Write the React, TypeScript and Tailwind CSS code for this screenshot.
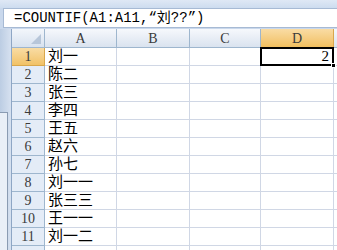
import React from "react";

const names = ["刘一", "陈二", "张三", "李四", "王五", "赵六", "孙七", "刘一一", "张三三", "王一一", "刘一二"];
const cols = ["A", "B", "C", "D"];

const serif = { fontFamily: "'Liberation Serif', 'Noto Sans CJK SC', serif" };

const App = () => {
    return (
        <div className="w-[337px] h-[250px] overflow-hidden flex flex-col bg-[#c9d8ec]">
            {/* top band */}
            <div className="h-[8px] bg-gradient-to-b from-[#dfe8f5] to-[#cddcef]" />

            {/* formula bar */}
            <div className="h-[20px] ml-[3px] bg-white border-y border-l border-[#a7bad4] flex items-center pl-[10px]">
                <span
                    className="text-[14px] text-black leading-none whitespace-nowrap"
                    style={{ fontFamily: "'Liberation Mono', 'Noto Sans CJK SC', monospace" }}
                >
                    =COUNTIF(A1:A11,“刘??”)
                </span>
            </div>
            <div className="h-[1px]" />

            <div className="flex flex-1 min-h-0">
                {/* left frame strip */}
                <div className="w-[12px] flex flex-col bg-gradient-to-r from-[#bccde3] to-[#d6e1f0] border-r border-[#8ea6c5]">
                    <div className="h-[83px]" />
                    <div className="flex-1 mr-[3px] bg-[#e9eff7] border-t border-r border-[#8a9bb2]" />
                </div>

                {/* sheet */}
                <div
                    className="flex-1 grid bg-white grid-cols-[33px_72px_73px_71px_73px_1fr] grid-rows-[19px_repeat(12,18px)]"
                    style={serif}
                >
                    {/* corner */}
                    <div className="relative bg-gradient-to-b from-[#f3f6fb] to-[#d8e2ef] border-r border-b border-[#9eb6ce]">
                        <div className="absolute right-[3px] bottom-[3px] w-0 h-0 border-l-[10px] border-l-transparent border-b-[10px] border-b-[#b7c6d9]" />
                    </div>
                    {cols.map((c) => (
                        <div
                            key={c}
                            className={
                                c === "D"
                                    ? "flex items-center justify-center text-[14px] text-[#3b3b3b] bg-gradient-to-b from-[#f9dca4] to-[#f1bf5e] border-r border-b border-[#d9a74c]"
                                    : "flex items-center justify-center text-[14px] text-[#3b3b3b] bg-gradient-to-b from-[#f6f8fc] to-[#dae3ef] border-r border-b border-[#9eb6ce]"
                            }
                        >
                            {c}
                        </div>
                    ))}
                    <div className="bg-gradient-to-b from-[#f6f8fc] to-[#dae3ef] border-b border-[#9eb6ce]" />

                    {Array.from({ length: 12 }).map((_, i) => (
                        <React.Fragment key={i}>
                            <div
                                className={
                                    i === 0
                                        ? "flex items-center justify-center text-[14px] text-[#3b3b3b] bg-gradient-to-b from-[#f9dca4] to-[#f1c266] border-r border-b border-[#d9a74c]"
                                        : "flex items-center justify-center text-[14px] text-[#3b3b3b] bg-[#e4ecf7] border-r border-b border-[#9eb6ce]"
                                }
                            >
                                {i < 11 ? i + 1 : ""}
                            </div>
                            <div className="flex items-center pl-[3px] text-[15px] text-black border-r border-b border-[#d0d7e5] whitespace-nowrap">
                                {names[i] ?? ""}
                            </div>
                            <div className="border-r border-b border-[#d0d7e5]" />
                            <div className="border-r border-b border-[#d0d7e5]" />
                            {i === 0 ? (
                                <div className="relative flex items-center justify-end pr-[3px] text-[15px] text-black border-2 border-black -mt-[1px] -ml-[1px]">
                                    2
                                    <div className="absolute -right-[4px] -bottom-[4px] w-[5px] h-[5px] bg-black border border-white" />
                                </div>
                            ) : (
                                <div className="border-r border-b border-[#d0d7e5]" />
                            )}
                            <div className="border-b border-[#d0d7e5]" />
                        </React.Fragment>
                    ))}
                </div>
            </div>
        </div>
    );
};

export default App;
